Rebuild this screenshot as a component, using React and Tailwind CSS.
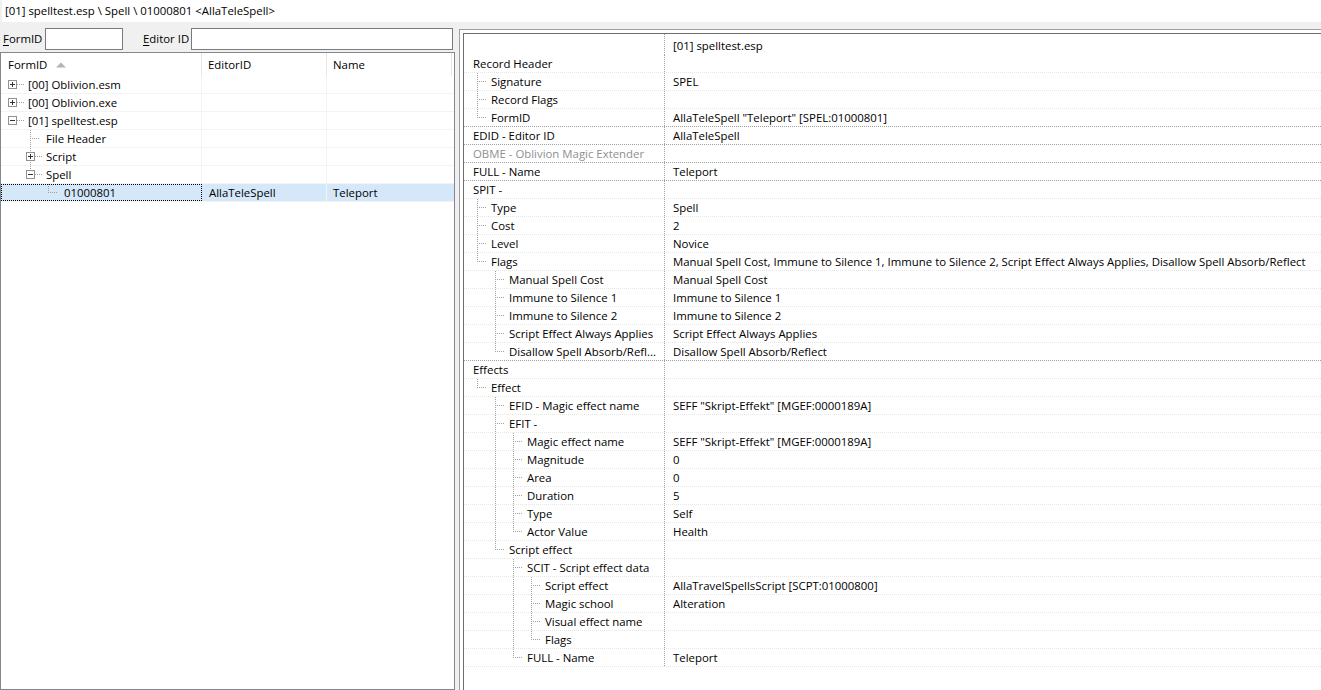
import React from 'react';

// left navigation tree (records of the loaded plugins)
const navRows = [
  { level: 0, btn: '+', text: '[00] Oblivion.esm' },
  { level: 0, btn: '+', text: '[00] Oblivion.exe' },
  { level: 0, btn: '-', text: '[01] spelltest.esp' },
  { level: 1, text: 'File Header' },
  { level: 1, btn: '+', text: 'Script' },
  { level: 1, btn: '-', text: 'Spell' },
  { level: 2, text: '01000801', editor: 'AllaTeleSpell', name: 'Teleport', selected: true },
];

// record view: label / value pairs
const viewRows = [
  { level: 0, label: 'Record Header' },
  { level: 1, label: 'Signature', value: 'SPEL' },
  { level: 1, label: 'Record Flags' },
  { level: 1, label: 'FormID', value: 'AllaTeleSpell "Teleport" [SPEL:01000801]' },
  { level: 0, label: 'EDID - Editor ID', value: 'AllaTeleSpell' },
  { level: 0, label: 'OBME - Oblivion Magic Extender', dim: true },
  { level: 0, label: 'FULL - Name', value: 'Teleport' },
  { level: 0, label: 'SPIT -' },
  { level: 1, label: 'Type', value: 'Spell' },
  { level: 1, label: 'Cost', value: '2' },
  { level: 1, label: 'Level', value: 'Novice' },
  {
    level: 1,
    label: 'Flags',
    value:
      'Manual Spell Cost, Immune to Silence 1, Immune to Silence 2, Script Effect Always Applies, Disallow Spell Absorb/Reflect',
  },
  { level: 2, label: 'Manual Spell Cost', value: 'Manual Spell Cost' },
  { level: 2, label: 'Immune to Silence 1', value: 'Immune to Silence 1' },
  { level: 2, label: 'Immune to Silence 2', value: 'Immune to Silence 2' },
  { level: 2, label: 'Script Effect Always Applies', value: 'Script Effect Always Applies' },
  { level: 2, label: 'Disallow Spell Absorb/Refl...', value: 'Disallow Spell Absorb/Reflect' },
  { level: 0, label: 'Effects' },
  { level: 1, label: 'Effect' },
  { level: 2, label: 'EFID - Magic effect name', value: 'SEFF "Skript-Effekt" [MGEF:0000189A]' },
  { level: 2, label: 'EFIT -' },
  { level: 3, label: 'Magic effect name', value: 'SEFF "Skript-Effekt" [MGEF:0000189A]' },
  { level: 3, label: 'Magnitude', value: '0' },
  { level: 3, label: 'Area', value: '0' },
  { level: 3, label: 'Duration', value: '5' },
  { level: 3, label: 'Type', value: 'Self' },
  { level: 3, label: 'Actor Value', value: 'Health' },
  { level: 2, label: 'Script effect' },
  { level: 3, label: 'SCIT - Script effect data' },
  { level: 4, label: 'Script effect', value: 'AllaTravelSpellsScript [SCPT:01000800]' },
  { level: 4, label: 'Magic school', value: 'Alteration' },
  { level: 4, label: 'Visual effect name' },
  { level: 4, label: 'Flags' },
  { level: 3, label: 'FULL - Name', value: 'Teleport' },
];

// is there another node at `level` below row i before the branch closes?
const hasNextAt = (rows, i, level) => {
  for (let j = i + 1; j < rows.length; j++) {
    if (rows[j].level < level) return false;
    if (rows[j].level === level) return true;
  }
  return false;
};

const withTree = (rows) =>
  rows.map((r, i) => {
    const cont = [];
    for (let k = 1; k < r.level; k++) cont.push(hasNextAt(rows, i, k));
    return { ...r, last: !hasNextAt(rows, i, r.level), cont };
  });

const LINE = '#a0a0a0';

const VLine = ({ x, y1, y2 }) => (
  <line x1={x + 0.5} y1={y1} x2={x + 0.5} y2={y2} stroke={LINE} strokeDasharray="1 1" shapeRendering="crispEdges" />
);
const HLine = ({ x1, x2, y }) => (
  <line x1={x1} y1={y + 0.5} x2={x2} y2={y + 0.5} stroke={LINE} strokeDasharray="1 1" shapeRendering="crispEdges" />
);

const ExpandBox = ({ cx, sign }) => (
  <g shapeRendering="crispEdges">
    <rect x={cx - 4 + 0.5} y={4.5} width={8} height={8} fill="#fff" stroke="#919191" />
    <line x1={cx - 2} y1={8.5} x2={cx + 3} y2={8.5} stroke="#333" />
    {sign === '+' && <line x1={cx + 0.5} y1={6} x2={cx + 0.5} y2={11} stroke="#333" />}
  </g>
);

function NavGutter({ row }) {
  const c = 11 + 18 * row.level;
  const w = 27 + 18 * row.level;
  return (
    <svg width={w} height={18} className="shrink-0">
      {row.cont.map((on, k) => (on ? <VLine key={k} x={11 + 18 * (k + 1)} y1={0} y2={18} /> : null))}
      {row.level > 0 && <VLine x={c} y1={0} y2={row.last ? 9 : 18} />}
      {row.btn ? (
        <>
          <HLine x1={c + 5} x2={c + 12} y={8} />
          <ExpandBox cx={c} sign={row.btn} />
        </>
      ) : (
        <HLine x1={c} x2={c + 10} y={8} />
      )}
    </svg>
  );
}

function ViewGutter({ row }) {
  const w = 9 + 18 * row.level;
  const c = 18 * row.level - 5;
  return (
    <svg width={w} height={18} className="shrink-0">
      {row.cont.map((on, k) => (on ? <VLine key={k} x={18 * (k + 1) - 5} y1={0} y2={18} /> : null))}
      {row.level > 0 && (
        <>
          <VLine x={c} y1={0} y2={row.last ? 9 : 18} />
          <HLine x1={c} x2={c + 9} y={8} />
        </>
      )}
    </svg>
  );
}

const SortArrow = () => (
  <svg width="10" height="6" className="ml-[9px] mt-[1px]">
    <path d="M0 5.5 L5 0.5 L10 5.5 Z" fill="#b4b4b4" />
  </svg>
);

function NavigationPane() {
  const rows = withTree(navRows);
  return (
    <div className="w-[455px] flex flex-col shrink-0">
      <div className="h-[30px] flex items-start pt-[6px]">
        <span className="w-[45px] shrink-0 pl-[3px] leading-[22px]">
          <span className="underline underline-offset-2">F</span>ormID
        </span>
        <div className="w-[78px] h-[22px] shrink-0 bg-white border border-[#7a7a7a]" />
        <span className="w-[68px] shrink-0 pl-[20px] leading-[22px]">
          <span className="underline underline-offset-2">E</span>ditor ID
        </span>
        <div className="w-[262px] h-[22px] shrink-0 bg-white border border-[#7a7a7a]" />
      </div>

      <div className="flex-1 bg-white border border-[#828790] flex flex-col">
        <div className="h-[23px] flex items-center">
          <div className="w-[201px] h-full flex items-center pl-[7px] border-r border-[#e5e5e5]">
            FormID
            <SortArrow />
          </div>
          <div className="w-[125px] h-full flex items-center pl-[6px] border-r border-[#e5e5e5]">EditorID</div>
          <div className="w-[125px] h-full flex items-center pl-[6px] border-r border-[#e5e5e5]">Name</div>
        </div>

        {rows.map((row, i) => (
          <div
            key={i}
            className={`h-[18px] flex border-b border-[#f3f3f3] ${row.selected ? 'bg-[#d5e8fa]' : ''}`}
          >
            <div
              className={`w-[201px] h-full flex items-center border-r ${
                row.selected ? 'outline outline-1 outline-dotted outline-[#000] -outline-offset-1 border-[#d5e8fa]' : 'border-[#f3f3f3]'
              }`}
            >
              <NavGutter row={row} />
              <span className="whitespace-nowrap">{row.text}</span>
            </div>
            <div className="w-[125px] h-full flex items-center pl-[7px] border-r border-[#f3f3f3]">{row.editor}</div>
            <div className="w-[125px] h-full flex items-center pl-[6px]">{row.name}</div>
          </div>
        ))}
      </div>
    </div>
  );
}

function RecordView() {
  const rows = withTree(viewRows);
  return (
    <div className="flex-1 mt-[7px] border-l border-t border-[#a0a0a0] bg-white pl-[3px] pt-[3px] flex">
      <div className="flex-1 border-l border-t border-[#6d6d6d] flex flex-col">
        <div className="h-[21px] flex">
          <div className="w-[201px] h-full border-r border-dotted border-[#a0a0a0]" />
          <div className="pl-[8px] pt-[3px] leading-[18px]">[01] spelltest.esp</div>
        </div>
        {rows.map((row, i) => {
          const next = rows[i + 1];
          const groupEnd = next && next.level === 0;
          return (
            <div
              key={i}
              className={`h-[18px] flex border-b border-dotted ${groupEnd ? 'border-[#a0a0a0]' : 'border-[#e6e6e6]'}`}
            >
              <div className="w-[201px] h-full flex items-center border-r border-dotted border-[#a0a0a0] overflow-hidden">
                <ViewGutter row={row} />
                <span className={`whitespace-nowrap ${row.dim ? 'text-[#8f8f8f]' : ''}`}>{row.label}</span>
              </div>
              <div className="flex-1 h-full flex items-center pl-[8px] whitespace-nowrap">{row.value}</div>
            </div>
          );
        })}
      </div>
    </div>
  );
}

export default function App() {
  return (
    <div className="w-[1321px] h-[690px] overflow-hidden bg-[#f0f0f0] flex flex-col text-[#000] font-['Open_Sans',sans-serif] text-[11.4px] leading-[18px]">
      <div className="h-[22px] ml-[2px] bg-white flex items-center pl-[3px] shrink-0">
        {'[01] spelltest.esp \\ Spell \\ 01000801 <AllaTeleSpell>'}
      </div>
      <div className="flex-1 flex min-h-0">
        <NavigationPane />
        <div className="w-[4px] shrink-0" />
        <RecordView />
      </div>
    </div>
  );
}
